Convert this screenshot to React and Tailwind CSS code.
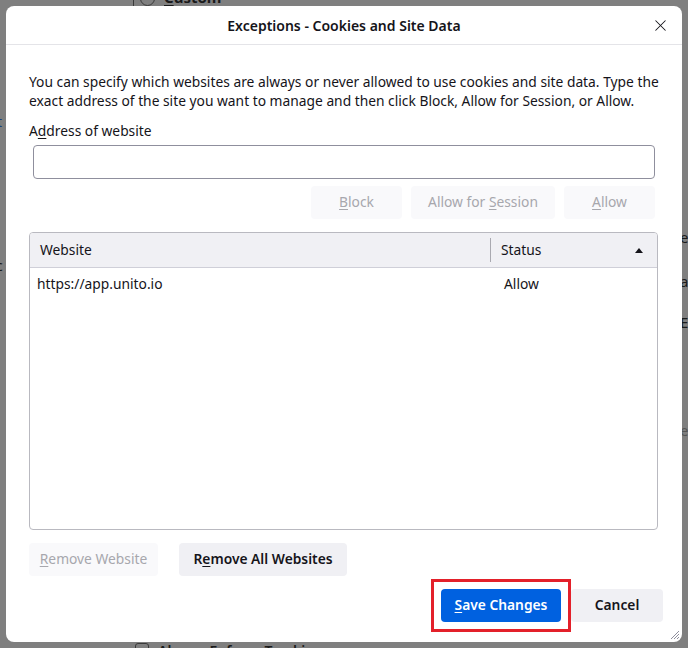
import { X } from 'lucide-react'

function Btn({ children, disabled, primary, className = '' }) {
  const tone = primary
    ? 'bg-[#0061e0] text-white font-semibold'
    : disabled
      ? 'bg-[#f9f9fb] text-[#a7a7ad]'
      : 'bg-[#f0f0f4] text-[#15141a] font-semibold'
  return (
    <button className={`h-[33px] shrink-0 rounded-[4px] text-[13.8px] flex items-center justify-center ${tone} ${className}`}>
      <span>{children}</span>
    </button>
  )
}

function Key({ children }) {
  return <span className="underline underline-offset-2">{children}</span>
}

export default function App() {
  return (
    <div className="relative w-[688px] h-[648px] overflow-hidden bg-[#7f7f7f] p-[6px] font-['Noto_Sans',sans-serif] text-[#15141a]">
      {/* page behind the modal */}
      <div className="absolute left-[133px] top-0 h-[8px] w-px bg-[#3a3a3a]" />
      <div className="absolute left-[140px] top-[-9px] h-[15px] w-[15px] rounded-full border border-[#3a3a3a]" />
      <div className="absolute left-[164px] top-[-14px] text-[15px] font-bold text-[#1a1a1a]"><Key>C</Key>ustom</div>
      <div className="absolute left-[-3px] top-[111px] text-[14px] text-[#1a3f7a]">t</div>
      <div className="absolute left-[-4px] top-[255px] text-[14px] text-[#1a1a1a]">c</div>
      <div className="absolute left-[680px] top-[226px] text-[15px] text-[#1a1a1a]">ea</div>
      <div className="absolute left-[680px] top-[270px] text-[15px] text-[#1a1a1a]">a</div>
      <div className="absolute left-[680px] top-[311px] text-[15px] text-[#1a1a1a]">E</div>
      <div className="absolute left-[680px] top-[419px] text-[15px] text-[#555]">e</div>
      <div className="absolute left-[135px] top-[643px] h-[14px] w-[14px] rounded-[3px] border border-[#3a3a3a]" />
      <div className="absolute left-[158px] top-[640px] text-[14px] font-semibold text-[#1a1a1a]">Always Enforce Tracking</div>

      <div className="relative z-10 flex h-[636px] w-[676px] flex-col rounded-[8px] bg-white">
        <div className="relative flex h-[39px] shrink-0 items-center justify-center border-b border-[#e4e4e8]">
          <span className="text-[14px] font-semibold">Exceptions - Cookies and Site Data</span>
          <X className="absolute right-[12px] top-[10px] h-[19px] w-[19px] text-[#15141a]" strokeWidth={1.3} />
        </div>

        <div className="flex flex-1 flex-col pl-[23px] pr-[24px] pt-[27px]">
          <p className="mr-[-20px] whitespace-nowrap text-[13.8px] leading-[19px]">
            You can specify which websites are always or never allowed to use cookies and site data. Type the
            <br />
            exact address of the site you want to manage and then click Block, Allow for Session, or Allow.
          </p>
          <div className="mt-[11px] text-[13.8px] leading-[20px]">A<Key>d</Key>dress of website</div>
          <div className="ml-[4px] mr-[3px] mt-[4px] h-[34px] shrink-0 rounded-[4px] border border-[#8f8f9d]" />
          <div className="mr-[3px] mt-[7px] flex justify-end gap-[9px]">
            <Btn disabled className="w-[91px] h-[32px]"><Key>B</Key>lock</Btn>
            <Btn disabled className="w-[144px] h-[32px]">Allow for <Key>S</Key>ession</Btn>
            <Btn disabled className="w-[91px] h-[32px]"><Key>A</Key>llow</Btn>
          </div>

          <div className="mt-[13px] flex h-[298px] shrink-0 flex-col overflow-hidden rounded-[4px] border border-[#b9b9c0]">
            <div className="flex h-[35px] items-center border-b border-[#cfcfd8] bg-[#f0f0f4] text-[13.8px]">
              <div className="flex-1 pl-[10px]">Website</div>
              <div className="h-[24px] w-px bg-[#a9a9b0]" />
              <div className="flex w-[166px] items-center justify-between pl-[10px] pr-[14px]">
                <span>Status</span>
                <span className="h-0 w-0 border-x-[4px] border-b-[5px] border-x-transparent border-b-[#15141a]" />
              </div>
            </div>
            <div className="flex h-[33px] items-center text-[13.8px]">
              <div className="flex-1 pl-[7px]">https://app.unito.io</div>
              <div className="w-[153px]">Allow</div>
            </div>
          </div>

          <div className="mt-[13px] flex gap-[21px]">
            <Btn disabled className="w-[129px]"><Key>R</Key>emove Website</Btn>
            <Btn className="w-[168px]">R<Key>e</Key>move All Websites</Btn>
          </div>

          <div className="mr-[-5px] mt-[3px] flex items-center justify-end">
            <div className="border-[3px] border-[#e3202a] p-[7px]">
              <Btn primary className="w-[120px]"><Key>S</Key>ave Changes</Btn>
            </div>
            <Btn className="w-[92px]">Cancel</Btn>
          </div>
        </div>

        <svg className="absolute bottom-[2px] right-[2px]" width="12" height="12" viewBox="0 0 12 12">
          <path d="M11 3 L3 11 M11 6 L6 11 M11 9 L9 11" stroke="#8f8f9d" strokeWidth="1" />
        </svg>
      </div>
    </div>
  )
}
